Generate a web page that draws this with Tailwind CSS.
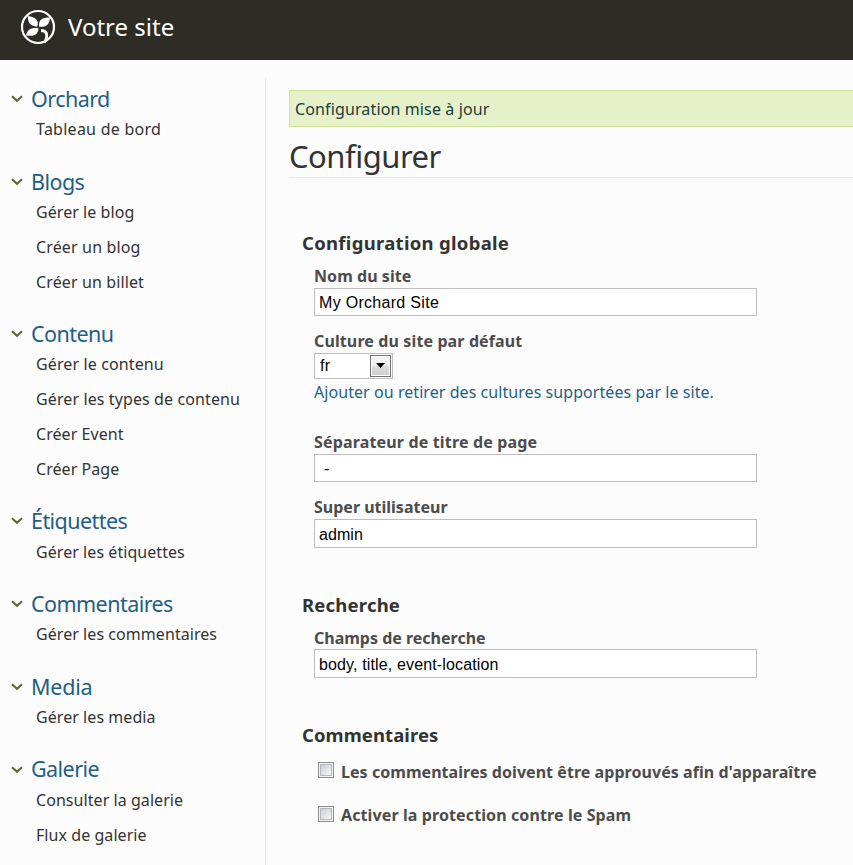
<!DOCTYPE html>
<html lang="fr">
<head>
<meta charset="utf-8">
<title>Configurer</title>
<script src="https://cdn.jsdelivr.net/npm/@tailwindcss/browser@4"></script>
</head>
<body class="h-[865px] overflow-hidden bg-[#fcfcfc] font-['Noto_Sans',sans-serif] text-[16px] tracking-[0.060px] text-[#333]">
<svg class="hidden"><symbol id="chev" viewBox="0 0 12 8"><path d="M1 1.200 6 5.800 11 1.200" fill="none" stroke="#5a6638" stroke-width="2"/></symbol></svg>
<header class="flex h-[60px] items-center bg-[#2d2d26] pl-5">
  <svg class="-mt-[6px] size-9 shrink-0" viewBox="0 0 36 36">
    <circle cx="18" cy="18" r="16" fill="none" stroke="#fff" stroke-width="2.200"/>
    <path d="M21 21.500Q25 21.500 26.500 24.500Q27.500 28 24.500 33.500" fill="none" stroke="#fff" stroke-width="2.800"/>
    <g fill="#fff"><path d="M17.200 17.700C9.500 17 7.500 13 8 7C15 8 19.500 11 17.200 17.700Z"/><path d="M19 17.700C18.500 10.500 22 8.500 30 8.500C29.500 15 27 18.500 19 17.700Z"/><path d="M18.500 19.300C18 26.500 13 27.500 6 26.500C7.500 20.500 11 18.300 18.500 19.300Z"/></g>
  </svg>
  <h1 class="-mt-[6px] ml-3 text-[24px] tracking-normal text-white">Votre site</h1>
</header>
<div class="flex h-[805px]">
  <nav class="mt-[18px] w-[266px] shrink-0 border-r border-[#e8e8e8] pt-[7.850px] [&_h2]:flex [&_h2]:h-[26px] [&_h2]:items-center [&_h2]:gap-2 [&_h2]:text-[21.500px] [&_h2]:tracking-[-0.550px] [&_h2]:text-[#1f5f87] [&_li]:flex [&_li]:h-[34.800px] [&_li]:items-center [&_section]:mb-[22px] [&_svg]:h-2 [&_svg]:w-3 [&_ul]:pl-9 [&_h2]:pl-[11px]">
    <section><h2><svg><use href="#chev"/></svg><span>Orchard</span></h2><ul><li><span class="tracking-[0.260px]">Tableau de bord</span></li></ul></section>
    <section><h2><svg><use href="#chev"/></svg><span>Blogs</span></h2><ul><li><span>Gérer le blog</span></li><li><span class="tracking-[0.150px]">Créer un blog</span></li><li><span class="tracking-[0.120px]">Créer un billet</span></li></ul></section>
    <section><h2><svg><use href="#chev"/></svg><span>Contenu</span></h2><ul><li><span class="tracking-[0.120px]">Gérer le contenu</span></li><li><span class="tracking-[0.110px]">Gérer les types de contenu</span></li><li><span>Créer Event</span></li><li><span>Créer Page</span></li></ul></section>
    <section><h2><svg><use href="#chev"/></svg><span>Étiquettes</span></h2><ul><li><span>Gérer les étiquettes</span></li></ul></section>
    <section><h2><svg><use href="#chev"/></svg><span>Commentaires</span></h2><ul><li><span>Gérer les commentaires</span></li></ul></section>
    <section><h2><svg><use href="#chev"/></svg><span class="tracking-[-0.200px]">Media</span></h2><ul><li><span>Gérer les media</span></li></ul></section>
    <section><h2><svg><use href="#chev"/></svg><span>Galerie</span></h2><ul><li><span>Consulter la galerie</span></li><li><span>Flux de galerie</span></li></ul></section>
  </nav>
  <main class="ml-[23px] flex-1 pt-[30px]">
    <div class="flex h-[37px] items-center border border-r-0 border-[#cfe493] bg-[#e6f1c9] pl-[5px] tracking-[0.130px] text-[#1d3c3c]"><span>Configuration mise à jour</span></div>
    <h1 class="h-[51px] border-b border-[#e8e8e8] text-[31px] leading-[58px] tracking-[-0.500px]"><span>Configurer</span></h1>
    <form class="pl-[13px] pt-[53px] [&_h2]:h-[24px] [&_h2]:text-[18.500px] [&_h2]:font-bold [&_h2]:leading-[24px] [&_h2]:tracking-[0.200px] [&_label]:font-bold [&_label]:text-[#4c4c4c]">
      <h2><span class="tracking-[0.300px]">Configuration globale</span></h2>
      <div class="pl-3">
        <label class="mt-[9px] block h-[24px] leading-[24px]"><span>Nom du site</span></label>
        <div class="flex h-[28px] w-[443px] items-center border border-[#bdbdbd] bg-white pl-1 pt-px font-['Liberation_Sans',sans-serif] tracking-[0.300px] text-black"><span>My Orchard Site</span></div>
        <label class="mt-[13px] block h-[24px] leading-[24px] tracking-[0.120px]"><span>Culture du site par défaut</span></label>
        <div class="flex h-[26px] w-[79px] items-center justify-between border border-[#bdbdbd] bg-white pl-[5px] pr-px font-['Liberation_Sans',sans-serif] tracking-[0.300px] text-black"><span>fr</span>
          <svg class="h-[22px] w-[21px]" viewBox="0 0 21 22"><defs><linearGradient id="g" x2="0" y2="1"><stop offset=".45" stop-color="#f2f2f2"/><stop offset=".55" stop-color="#dcdcdc"/><stop offset="1" stop-color="#cfcfcf"/></linearGradient></defs><rect x=".5" y=".5" width="20" height="21" fill="#fff" stroke="#707070"/><rect x="2" y="2" width="17" height="18" fill="url(#g)"/><path d="M6 8h9l-4.500 5z" fill="#000"/></svg></div>
        <p class="h-[26px] leading-[26px] text-[#1f5f87]"><span>Ajouter ou retirer des cultures supportées par le site.</span></p>
        <label class="mt-[25px] block h-[24px] leading-[24px] tracking-[0.160px]"><span>Séparateur de titre de page</span></label>
        <div class="flex h-[28px] w-[443px] items-center border border-[#bdbdbd] bg-white pl-[9px] pt-[2px] font-['Liberation_Sans',sans-serif] text-black"><span>-</span></div>
        <label class="mt-[13px] block h-[24px] leading-[24px] tracking-normal"><span>Super utilisateur</span></label>
        <div class="flex h-[29px] w-[443px] items-center border border-[#bdbdbd] bg-white pl-1 pt-[2px] font-['Liberation_Sans',sans-serif] text-black"><span>admin</span></div>
      </div>
      <h2 class="mt-[45px]"><span>Recherche</span></h2>
      <div class="pl-3">
        <label class="mt-[8px] block h-[24px] leading-[26px] tracking-normal"><span>Champs de recherche</span></label>
        <div class="flex h-[29px] w-[443px] items-center border border-[#bdbdbd] bg-white pl-1 pt-[2px] font-['Liberation_Sans',sans-serif] tracking-[0.140px] text-black"><span>body, title, event-location</span></div>
      </div>
      <h2 class="mt-[45px]"><span class="tracking-[0.080px]">Commentaires</span></h2>
      <div class="pl-4">
        <label class="mt-[13px] flex h-[24px] items-center gap-[7px] tracking-[0.050px]"><i class="-mt-[5px] flex size-4 items-center justify-center border border-[#8e8f8f] bg-[#f4f4f4]"><i class="size-3 border border-[#b3b8c0] bg-linear-to-br from-[#cbcfd5] to-[#f6f6f6]"></i></i><span>Les commentaires doivent être approuvés afin d'apparaître</span></label>
        <label class="mt-[19px] flex h-[24px] items-center gap-[7px] tracking-[0.110px]"><i class="-mt-[3px] flex size-4 items-center justify-center border border-[#8e8f8f] bg-[#f4f4f4]"><i class="size-3 border border-[#b3b8c0] bg-linear-to-br from-[#cbcfd5] to-[#f6f6f6]"></i></i><span>Activer la protection contre le Spam</span></label>
      </div>
    </form>
  </main>
</div>
</body>
</html>
